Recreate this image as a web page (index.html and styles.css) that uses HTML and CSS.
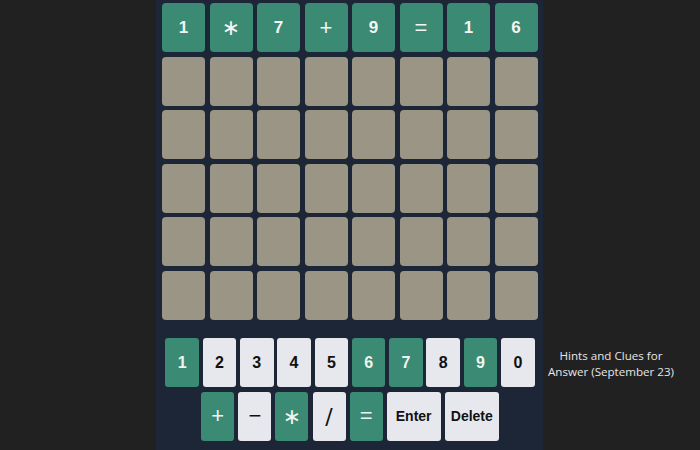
FILE: index.html
```html
<!DOCTYPE html>
<html>
<head>
<meta charset="utf-8">
<link rel="stylesheet" href="styles.css">
</head>
<body>
<div class="page">
  <div class="panel">
    <div class="board">
      <div class="cell hit">1</div><div class="cell hit op">∗</div><div class="cell hit">7</div><div class="cell hit sign">+</div><div class="cell hit">9</div><div class="cell hit sign">=</div><div class="cell hit">1</div><div class="cell hit">6</div>
      <div class="cell"></div><div class="cell"></div><div class="cell"></div><div class="cell"></div><div class="cell"></div><div class="cell"></div><div class="cell"></div><div class="cell"></div>
      <div class="cell"></div><div class="cell"></div><div class="cell"></div><div class="cell"></div><div class="cell"></div><div class="cell"></div><div class="cell"></div><div class="cell"></div>
      <div class="cell"></div><div class="cell"></div><div class="cell"></div><div class="cell"></div><div class="cell"></div><div class="cell"></div><div class="cell"></div><div class="cell"></div>
      <div class="cell"></div><div class="cell"></div><div class="cell"></div><div class="cell"></div><div class="cell"></div><div class="cell"></div><div class="cell"></div><div class="cell"></div>
      <div class="cell"></div><div class="cell"></div><div class="cell"></div><div class="cell"></div><div class="cell"></div><div class="cell"></div><div class="cell"></div><div class="cell"></div>
    </div>
    <div class="keyboard">
      <div class="krow">
        <div class="key green">1</div><div class="key">2</div><div class="key">3</div><div class="key">4</div><div class="key">5</div><div class="key green">6</div><div class="key green">7</div><div class="key">8</div><div class="key green">9</div><div class="key">0</div>
      </div>
      <div class="krow">
        <div class="key green sym">+</div><div class="key sym">−</div><div class="key green sym op">∗</div><div class="key sym slash">∕</div><div class="key green sym">=</div><div class="key wide">Enter</div><div class="key wide">Delete</div>
      </div>
    </div>
  </div>
  <div class="side">Hints and Clues for Answer (September 23)</div>
</div>
</body>
</html>
```
FILE: styles.css
```css
html, body {
  margin: 0;
  padding: 0;
  background: #212121;
  width: 700px;
  height: 450px;
  overflow: hidden;
}
.page {
  display: flex;
  padding-left: 156px;
  height: 450px;
}
.panel {
  width: 387px;
  height: 450px;
  background: #1c2636;
  box-sizing: border-box;
  padding: 3px 5px 0 6px;
  display: flex;
  flex-direction: column;
}
.board {
  display: grid;
  grid-template-columns: repeat(8, 43px);
  grid-template-rows: repeat(6, 49px);
  column-gap: 4.5px;
  row-gap: 4.5px;
}
.cell {
  background: #9b9586;
  border-radius: 4px;
  display: flex;
  align-items: center;
  justify-content: center;
  font-family: "Liberation Sans", Arial, sans-serif;
  font-weight: bold;
  font-size: 17px;
  color: #f4f4f4;
}
.cell.hit {
  background: #3b8a73;
}
.cell.op {
  font-family: "DejaVu Sans", sans-serif;
  font-weight: normal;
  font-size: 22px;
}
.cell.sign {
  font-weight: normal;
  font-size: 22px;
}
.keyboard {
  margin-top: 18.5px;
  display: flex;
  flex-direction: column;
  gap: 4.5px;
  align-items: center;
}
.krow {
  display: flex;
  gap: 3.8px;
}
.krow + .krow {
  gap: 4.1px;
}
.key {
  width: 33.5px;
  height: 49px;
  background: #e6e8ee;
  color: #111;
  border-radius: 3px;
  display: flex;
  align-items: center;
  justify-content: center;
  font-family: "Liberation Sans", Arial, sans-serif;
  font-weight: bold;
  font-size: 16px;
}
.key.green {
  background: #3b8a73;
  color: #eef5f1;
}
.key.sym {
  width: 33px;
  font-size: 22px;
  font-weight: normal;
}
.key.op {
  font-family: "DejaVu Sans", sans-serif;
  font-size: 22px;
}
.key.slash {
  font-family: "DejaVu Sans", sans-serif;
  font-size: 22px;
}
.key.wide {
  width: 54px;
  font-size: 14px;
}
.side {
  width: 136px;
  padding-top: 348px;
  text-align: center;
  font-family: "Open Sans", sans-serif;
  font-size: 11.6px;
  line-height: 16px;
  color: #e6e6e6;
}
```
